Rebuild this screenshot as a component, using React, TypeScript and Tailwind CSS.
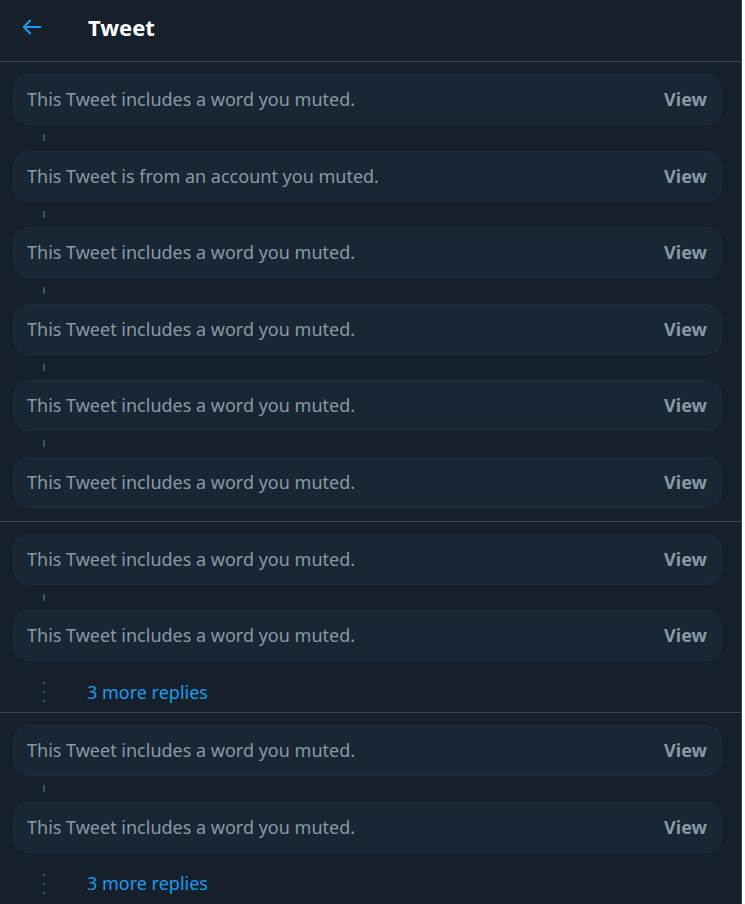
import React from 'react';

const sections = [
	{
		items: [
			'This Tweet includes a word you muted.',
			'This Tweet is from an account you muted.',
			'This Tweet includes a word you muted.',
			'This Tweet includes a word you muted.',
			'This Tweet includes a word you muted.',
			'This Tweet includes a word you muted.',
		],
		more: false,
	},
	{
		items: ['This Tweet includes a word you muted.', 'This Tweet includes a word you muted.'],
		more: true,
	},
	{
		items: ['This Tweet includes a word you muted.', 'This Tweet includes a word you muted.'],
		more: true,
	},
];

function MutedCard({ text }: { text: string }) {
	return (
		<div className="flex items-center h-[51px] rounded-2xl border border-[#1f2c39] bg-[#192633] pl-[13px] pr-[14px]">
			<span className="text-[18px] text-[#8899a6]">{text}</span>
			<span className="ml-auto text-[18px] font-bold text-[#8899a6]">View</span>
		</div>
	);
}

function App() {
	return (
		<div
			className="w-[742px] min-h-[904px] bg-[#15202b] border-r border-[#38444d]"
			style={{ fontFamily: '"Noto Sans", "Open Sans", sans-serif' }}
		>
			<header className="flex items-start h-[62px] pt-[12px] border-b border-[#38444d]">
				<div className="w-[88px] pl-[21px] h-[30px] flex items-center">
					<svg width="22" height="22" viewBox="0 0 24 24" fill="none" stroke="#1d9bf0" strokeWidth="2.2" strokeLinecap="round" strokeLinejoin="round">
						<path d="M21 12H4" />
						<path d="M10 5l-7 7 7 7" />
					</svg>
				</div>
				<h1 className="text-[22px] leading-[30px] font-bold text-white">Tweet</h1>
			</header>
			{sections.map((sec, si) => (
				<section key={si} className={'pl-[13px] pr-[19px] pt-[12px] border-b border-[#38444d] ' + (sec.more ? '' : 'pb-[13px]')}>
					{sec.items.map((item, i) => (
						<div key={i}>
							{i > 0 && (
								<div className="h-[25.5px] flex items-center pl-[30px]">
									<div className="w-[2px] h-[7px] bg-[#3d5466]"></div>
								</div>
							)}
							<MutedCard text={item} />
						</div>
					))}
					{sec.more && (
						<div className="flex items-center h-[51px] pt-[11px]">
							<div className="w-[74px] pl-[30px] flex flex-col gap-[7px]">
								<div className="w-[2px] h-[2px] bg-[#3d5466]"></div>
								<div className="w-[2px] h-[2px] bg-[#3d5466]"></div>
								<div className="w-[2px] h-[2px] bg-[#3d5466]"></div>
							</div>
							<span className="text-[18px] text-[#1d9bf0]">3 more replies</span>
						</div>
					)}
				</section>
			))}
		</div>
	);
}

export default App;
